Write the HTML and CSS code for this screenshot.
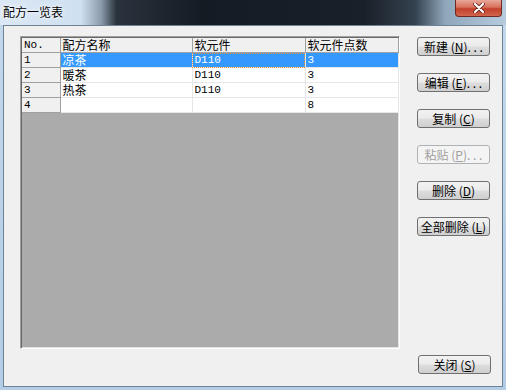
FILE: index.html
```html
<!DOCTYPE html>
<html lang="zh-CN">
<head>
    <meta charset="UTF-8">
    <title>配方一览表</title>
    <link rel="stylesheet" href="styles.css">
</head>
<body>
    <div class="window">
        <div class="titlebar">
            <span class="title">配方一览表</span>
            <div class="close-btn">
                <svg width="14" height="10" viewBox="0 0 14 10">
                    <path d="M3 1 L11 9 M11 1 L3 9" stroke="#5a1a10" stroke-width="3.6" stroke-linecap="round"/>
                    <path d="M3 1 L11 9 M11 1 L3 9" stroke="#ffffff" stroke-width="2.2" stroke-linecap="round"/>
                </svg>
            </div>
        </div>

        <div class="client">
            <div class="main">
                <div class="grid">
                    <table class="recipes">
                        <colgroup>
                            <col style="width: 38px">
                            <col style="width: 132px">
                            <col style="width: 113px">
                            <col style="width: 93px">
                        </colgroup>
                        <tr>
                            <th class="lat">No.</th>
                            <th>配方名称</th>
                            <th>软元件</th>
                            <th>软元件点数</th>
                        </tr>
                        <tr class="selected">
                            <th class="lat">1</th>
                            <td>凉茶</td>
                            <td class="lat focus">D110</td>
                            <td class="lat">3</td>
                        </tr>
                        <tr>
                            <th class="lat">2</th>
                            <td>暖茶</td>
                            <td class="lat">D110</td>
                            <td class="lat">3</td>
                        </tr>
                        <tr>
                            <th class="lat">3</th>
                            <td>热茶</td>
                            <td class="lat">D110</td>
                            <td class="lat">3</td>
                        </tr>
                        <tr>
                            <th class="lat">4</th>
                            <td></td>
                            <td></td>
                            <td class="lat">8</td>
                        </tr>
                    </table>
                </div>

                <div class="actions">
                    <button class="btn">新建 (<u>N</u>). . .</button>
                    <button class="btn">编辑 (<u>E</u>). . .</button>
                    <button class="btn">复制 (<u>C</u>)</button>
                    <button class="btn" disabled>粘贴 (<u>P</u>). . .</button>
                    <button class="btn">删除 (<u>D</u>)</button>
                    <button class="btn">全部删除 (<u>L</u>)</button>
                </div>
            </div>

            <div class="footer">
                <button class="btn">关闭 (<u>S</u>)</button>
            </div>
        </div>
    </div>
</body>
</html>
```

FILE: styles.css
```css
body {
    margin: 0;
    padding: 0;
    font-family: "Noto Sans CJK SC", sans-serif;
    font-size: 12px;
}

.window {
    width: 506px;
    height: 390px;
    background: linear-gradient(to bottom, #c3d8ec, #b3cde6);
    display: flex;
    flex-direction: column;
    overflow: hidden;
}

/* title bar */
.titlebar {
    height: 25px;
    flex-shrink: 0;
    display: flex;
    align-items: flex-start;
    justify-content: space-between;
    background: linear-gradient(to right, #dbe8f5 0, #cfe0f1 16%, #8a9aab 20%, #2a323d 23%, #151b23 40%, #1a2029 72%, #34414e 82%, #8fa7bb 88%, #b6cbde 100%);
}

.title {
    margin: 4px 0 0 3px;
    line-height: 16px;
    color: #000;
    text-shadow: 0 0 6px #fff, 0 0 3px #fff;
    padding-right: 12px;
}

.close-btn {
    width: 45px;
    height: 16px;
    margin-right: 4px;
    border: 1px solid #6e2a22;
    border-top: none;
    border-radius: 0 0 4px 4px;
    background: linear-gradient(to bottom, #e9a899 0, #d6705d 45%, #c3402b 55%, #d2664e 100%);
    display: flex;
    align-items: center;
    justify-content: center;
}

/* client area */
.client {
    flex: 1;
    margin: 0 3px 3px 3px;
    border: 1px solid #6f8294;
    background: #f0f0f0;
    display: flex;
    flex-direction: column;
}

.main {
    display: flex;
    gap: 17px;
    padding: 10px 0 0 16px;
}

.grid {
    width: 376px;
    height: 309px;
    border: 1px solid;
    border-color: #a0a0a0 #ffffff #ffffff #a0a0a0;
    box-shadow: inset 1px 1px 0 #696969, inset -1px -1px 0 #e3e3e3;
    padding: 1px;
    background: #ababab;
}

.recipes {
    border-collapse: collapse;
    table-layout: fixed;
    width: 376px;
}

.recipes th,
.recipes td {
    height: 14px;
    padding: 0 0 0 2px;
    line-height: 14px;
    text-align: left;
    font-weight: normal;
    white-space: nowrap;
}

.recipes th {
    background: #f0f0f0;
    border-right: 1px solid #a0a0a0;
    border-bottom: 1px solid #a0a0a0;
}

.recipes td {
    background: #ffffff;
    border-right: 1px solid #e6e6e6;
    border-bottom: 1px solid #e6e6e6;
}

.recipes .lat {
    font-family: "Liberation Mono", monospace;
    font-size: 11px;
}

.recipes tr.selected td {
    background: #3399ff;
    color: #ffffff;
}

.recipes td.focus {
    outline: 1px dotted #e8903a;
    outline-offset: -1px;
}

/* buttons */
.actions {
    display: flex;
    flex-direction: column;
    gap: 17px;
    padding-top: 1px;
}

.btn {
    width: 73px;
    height: 19px;
    padding: 0;
    border: 1px solid #707070;
    border-radius: 3px;
    background: linear-gradient(to bottom, #f2f2f2 0, #ebebeb 48%, #dddddd 52%, #cfcfcf 100%);
    font-family: "Noto Sans CJK SC", sans-serif;
    font-size: 12px;
    line-height: 16px;
    color: #000;
    white-space: nowrap;
}

.btn:disabled {
    border-color: #adb2b5;
    background: #f4f4f4;
    color: #a0a0a0;
}

.footer {
    display: flex;
    justify-content: flex-end;
    padding: 6px 11px 0 0;
}
```
